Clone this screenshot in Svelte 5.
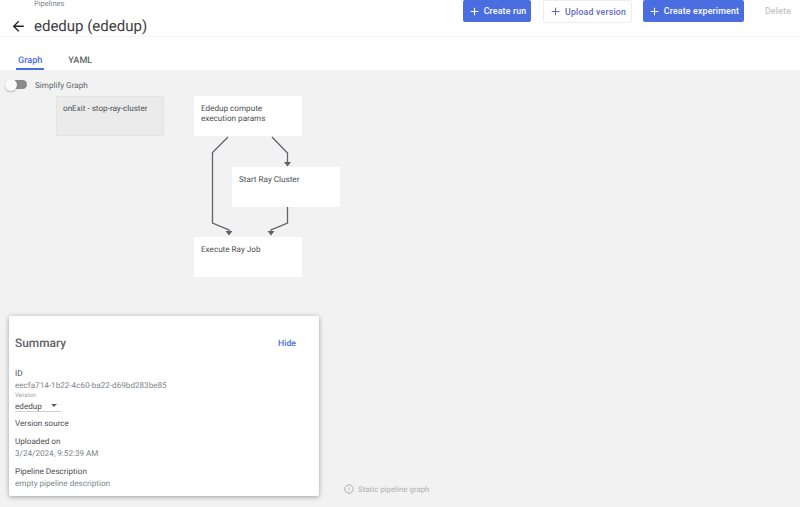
<script lang="ts">
	const nodes = [
		{ label: 'onExit - stop-ray-cluster', x: 56, y: 26, exit: true },
		{ label: 'Ededup compute execution params', x: 194, y: 26 },
		{ label: 'Start Ray Cluster', x: 232, y: 97 },
		{ label: 'Execute Ray Job', x: 194, y: 167 }
	];

	const edges = [
		'M228 67 L212.5 82.5 L212.5 153 L229 160 L229 162',
		'M272 67 L287.5 83 L287.5 93',
		'M287.5 137 L287.5 153 L271 160 L271 162'
	];

	const heads = [
		'M225.5 161 L232.5 161 L229 165.5 Z',
		'M267.5 161 L274.5 161 L271 165.5 Z',
		'M284 92 L291 92 L287.5 96.5 Z'
	];

	const summary = [
		{ label: 'Uploaded on', value: '3/24/2024, 9:52:39 AM' },
		{ label: 'Pipeline Description', value: 'empty pipeline description' }
	];

	const plus = 'M19 13h-6v6h-2v-6H5v-2h6V5h2v6h6v2z';
</script>

<div class="page">
	<header class="topbar">
		<div class="titles">
			<div class="crumb">Pipelines</div>
			<div class="title-row">
				<svg class="back" viewBox="0 0 24 24" width="16.5" height="16.5">
					<path d="M20 11H7.83l5.59-5.59L12 4l-8 8 8 8 1.41-1.41L7.83 13H20v-2z" />
				</svg>
				<h1>ededup (ededup)</h1>
			</div>
		</div>
		<div class="actions">
			<button class="btn primary run"><svg viewBox="0 0 24 24" width="13" height="13"><path d={plus} /></svg>Create run</button>
			<button class="btn outline"><svg viewBox="0 0 24 24" width="13" height="13"><path d={plus} /></svg>Upload version</button>
			<button class="btn primary exp"><svg viewBox="0 0 24 24" width="13" height="13"><path d={plus} /></svg>Create experiment</button>
			<button class="btn ghost">Delete</button>
		</div>
	</header>

	<nav class="tabs">
		<div class="tab active">Graph</div>
		<div class="tab">YAML</div>
	</nav>

	<main class="canvas">
		<div class="simplify">
			<span class="switch"><span class="track"></span><span class="thumb"></span></span>
			<span>Simplify Graph</span>
		</div>

		{#each nodes as node}
			<div class="node" class:exit={node.exit} style="left:{node.x}px;top:{node.y}px">{node.label}</div>
		{/each}

		<svg class="edges" width="800" height="437" viewBox="0 0 800 437">
			{#each edges as d}
				<path {d} class="edge" />
			{/each}
			{#each heads as d}
				<path {d} class="head" />
			{/each}
		</svg>

		<section class="summary">
			<div class="summary-head">
				<h2>Summary</h2>
				<span class="hide">Hide</span>
			</div>
			<div class="label first">ID</div>
			<div class="value">eecfa714-1b22-4c60-ba22-d69bd283be85</div>
			<div class="version-label">Version</div>
			<div class="select">ededup<span class="caret"></span></div>
			<div class="label source">Version source</div>
			{#each summary as row}
				<div class="label">{row.label}</div>
				<div class="value">{row.value}</div>
			{/each}
		</section>

		<div class="static-note">
			<svg viewBox="0 0 24 24" width="10" height="10">
				<circle cx="12" cy="12" r="10" />
				<path d="M12 8v5M12 15.5v1.5" />
			</svg>
			<span>Static pipeline graph</span>
		</div>
	</main>
</div>

<style>
	:global(body) {
		margin: 0;
		background: #fff;
	}

	.page {
		width: 800px;
		height: 507px;
		display: flex;
		flex-direction: column;
		overflow: hidden;
		font-family: Roboto, 'Liberation Sans', sans-serif;
		text-rendering: geometricPrecision;
	}

	.topbar {
		height: 37px;
		flex-shrink: 0;
		display: flex;
		justify-content: space-between;
		border-bottom: 1px solid #f6f6f6;
		box-sizing: border-box;
	}

	.titles {
		padding-left: 10px;
	}

	.crumb {
		height: 7px;
		margin-left: 24px;
		font-size: 7.5px;
		line-height: 7px;
		color: #80868b;
	}

	.title-row {
		display: flex;
		align-items: center;
		height: 22px;
		margin-top: 8px;
	}

	.back {
		fill: #202124;
		margin-right: 7.5px;
	}

	h1 {
		margin: 0;
		font-size: 15px;
		font-weight: 400;
		color: #3c4043;
	}

	.actions {
		display: flex;
		align-items: flex-start;
		padding-right: 9px;
	}

	.btn {
		display: flex;
		align-items: center;
		justify-content: center;
		gap: 3px;
		height: 22px;
		padding: 0;
		border: 0;
		border-radius: 2px;
		font-family: inherit;
		font-size: 8.75px;
		font-weight: 500;
		letter-spacing: 0.2px;
		white-space: nowrap;
	}

	.primary {
		background: #4a6ee0;
		color: #fff;
		fill: #fff;
	}

	.run {
		width: 68px;
		margin-right: 12px;
	}

	.exp {
		width: 101px;
		margin-right: 21px;
	}

	.outline {
		width: 89px;
		height: 23px;
		margin-right: 11px;
		background: #fff;
		border: 1px solid #eceef2;
		color: #5c6bc0;
		fill: #5c6bc0;
	}

	.ghost {
		width: 26px;
		background: none;
		color: #c4c4c4;
	}

	.tabs {
		height: 33px;
		flex-shrink: 0;
		display: flex;
		padding-left: 16px;
		box-sizing: border-box;
	}

	.tab {
		margin-right: 22px;
		padding: 19px 2px 0;
		height: 33px;
		box-sizing: border-box;
		font-size: 9.1px;
		font-weight: 500;
		color: #5f6368;
	}

	.tab.active {
		color: #4a6ee0;
		border-bottom: 2px solid #4a6ee0;
	}

	.canvas {
		position: relative;
		flex: 1;
		background: #f2f2f2;
	}

	.simplify {
		display: flex;
		align-items: center;
		height: 30px;
		padding-left: 5px;
		font-size: 8.15px;
		color: #5f6368;
	}

	.switch {
		position: relative;
		width: 22px;
		height: 12px;
		margin-right: 8px;
	}

	.track {
		position: absolute;
		left: 2px;
		top: 1px;
		width: 20px;
		height: 9px;
		border-radius: 5px;
		background: #8a8a8a;
	}

	.thumb {
		position: absolute;
		left: 0;
		top: -0.5px;
		width: 12px;
		height: 12px;
		border-radius: 50%;
		background: #fafafa;
		box-shadow: 0 1px 2px rgba(0, 0, 0, 0.25);
	}

	.node {
		position: absolute;
		width: 108px;
		height: 40px;
		box-sizing: border-box;
		padding: 6.5px 7px;
		background: #fff;
		font-size: 8.15px;
		line-height: 10px;
		color: #4a4d50;
	}

	.node.exit {
		background: #ebebeb;
		box-shadow: inset 0 0 0 1px #e4e4e4;
	}

	.edges {
		position: absolute;
		left: 0;
		top: 0;
		pointer-events: none;
	}

	.edge {
		fill: none;
		stroke: #5f6368;
		stroke-width: 1.3;
	}

	.head {
		fill: #5f6368;
	}

	.summary {
		position: absolute;
		left: 9px;
		top: 246px;
		width: 310px;
		height: 180px;
		box-sizing: border-box;
		padding: 0 6px;
		background: #fff;
		border-radius: 2px;
		box-shadow: 0 1px 5px rgba(0, 0, 0, 0.35);
		font-size: 8.15px;
		color: #4a4d50;
	}

	.summary-head {
		display: flex;
		justify-content: space-between;
		align-items: center;
		height: 48px;
		padding: 6px 17px 0 0;
		box-sizing: border-box;
	}

	h2 {
		margin: 0;
		font-size: 11.9px;
		font-weight: 500;
		color: #5f6368;
	}

	.hide {
		margin-top: 1px;
		font-size: 8.75px;
		font-weight: 500;
		color: #4a6ee0;
	}

	.label {
		line-height: 12px;
		margin-top: 6px;
	}

	.label.first {
		margin-top: 3px;
	}

	.label.source {
		margin-top: 5px;
	}

	.value {
		line-height: 12px;
		color: #80868b;
	}

	.version-label {
		font-size: 6.25px;
		color: #9aa0a6;
		line-height: 8px;
	}

	.select {
		position: relative;
		width: 46px;
		height: 12px;
		margin-top: 1px;
		line-height: 12px;
		border-bottom: 1px solid #d0d0d0;
		box-sizing: border-box;
	}

	.caret {
		position: absolute;
		right: 4px;
		top: 4px;
		width: 0;
		height: 0;
		border-left: 3.5px solid transparent;
		border-right: 3.5px solid transparent;
		border-top: 3.5px solid #5f6368;
	}

	.static-note {
		position: absolute;
		left: 344px;
		top: 414px;
		display: flex;
		align-items: center;
		gap: 4px;
		font-size: 7.9px;
		color: #b0b0b0;
	}

	.static-note svg {
		fill: none;
		stroke: #a0a0a0;
		stroke-width: 2;
	}
</style>
